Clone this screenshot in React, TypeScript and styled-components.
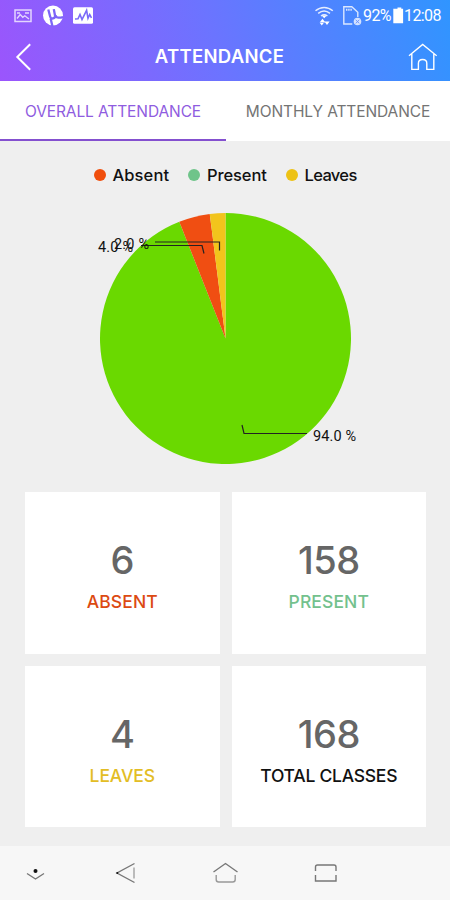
import React from "react";
import styled, { createGlobalStyle } from "styled-components";

const GlobalStyle = createGlobalStyle`
  * { box-sizing: border-box; }
  body { margin: 0; background: #efefef; }
`;

const Screen = styled.div`
  width: 450px;
  height: 900px;
  display: flex;
  flex-direction: column;
  overflow: hidden;
  background: #efefef;
  font-family: Inter, sans-serif;
  white-space: nowrap;
`;

const Header = styled.header`
  height: 81px;
  flex: none;
  color: #fff;
  background: linear-gradient(72deg, #9b55fc 0%, #6b74ff 48%, #3095ff 100%);
`;

const StatusBar = styled.div`
  height: 32px;
  display: flex;
  align-items: center;
  justify-content: space-between;
  padding: 0 8px 0 14px;
`;

const StatusGroup = styled.div`
  display: flex;
  align-items: center;
`;

const StatusText = styled.span<{ $width: number }>`
  width: ${(p) => p.$width}px;
  font: 400 16px/32px Roboto, sans-serif;
  letter-spacing: -0.6px;
`;

const TitleBar = styled.div`
  height: 49px;
  display: grid;
  grid-template-columns: 55px 1fr 66px;
  align-items: center;
`;

const Title = styled.h1`
  margin: 0;
  padding-bottom: 2px;
  text-align: center;
  font-size: 18.5px;
  line-height: 24px;
  font-weight: 600;
  letter-spacing: 0.3px;
`;

const IconSlot = styled.div<{ $end?: boolean }>`
  display: flex;
  justify-content: ${(p) => (p.$end ? "flex-end" : "flex-start")};
  padding: 0 13px;
`;

const Tabs = styled.nav`
  height: 60px;
  flex: none;
  display: grid;
  grid-template-columns: 226px 224px;
  background: #fff;
`;

const Tab = styled.div<{ $active?: boolean }>`
  text-align: center;
  font-size: 15.5px;
  line-height: 61px;
  height: 60px;
  letter-spacing: -0.1px;
  color: ${(p) => (p.$active ? "#8f5ce0" : "#747474")};
  box-shadow: ${(p) => (p.$active ? "inset 0 -2px #8450cf" : "none")};
`;

const Legend = styled.div`
  height: 68px;
  flex: none;
  display: grid;
  grid-template-columns: 94.5px 97.5px 67px;
  padding-left: 93.5px;
`;

const LegendItem = styled.div<{ $color: string; $spacing: number }>`
  display: flex;
  align-items: center;
  gap: 7px;
  font-size: 16.5px;
  font-weight: 450;
  letter-spacing: ${(p) => p.$spacing}px;
  color: #111;
  &::before {
    content: "";
    width: 12px;
    height: 12px;
    flex: none;
    border-radius: 50%;
    background: ${(p) => p.$color};
  }
`;

const Chart = styled.svg`
  flex: none;
  display: block;
  font-family: Roboto, sans-serif;
  font-size: 14.5px;
`;

const Cards = styled.main`
  flex: none;
  height: 354px;
  padding: 0 24px 19px 25px;
  display: grid;
  grid-template-columns: 1fr 1fr;
  grid-template-rows: 162px 161px;
  gap: 12px;
`;

const Card = styled.section`
  display: flex;
  flex-direction: column;
  align-items: center;
  padding-top: 46px;
  background: #fff;
`;

const Count = styled.div`
  font-size: 38px;
  line-height: 44px;
  font-weight: 500;
  letter-spacing: -0.5px;
  color: #666;
`;

const CardLabel = styled.div<{ $color: string; $spacing: number }>`
  margin-top: 7px;
  font-size: 17.5px;
  line-height: 25px;
  font-weight: 500;
  letter-spacing: ${(p) => p.$spacing}px;
  color: ${(p) => p.$color};
`;

const NavBar = styled.footer`
  height: 54px;
  flex: none;
  background: #f7f7f7;
`;

const legend = [
  { label: "Absent", color: "#f04e0c", spacing: 0.1 },
  { label: "Present", color: "#6fc48a", spacing: -0.1 },
  { label: "Leaves", color: "#edc215", spacing: -0.65 },
];

const cards = [
  { count: 6, label: "ABSENT", color: "#dc4a12", spacing: 0.1 },
  { count: 158, label: "PRESENT", color: "#73c18d", spacing: 0.1 },
  { count: 4, label: "LEAVES", color: "#e3bd25", spacing: -0.1 },
  { count: 168, label: "TOTAL CLASSES", color: "#111", spacing: -0.25 },
];

const CX = 225.5;
const CY = 338.5;
const R = 125.5;

const slicePath = (from: number, to: number) => {
  const at = (f: number) => {
    const a = f * Math.PI * 2;
    return `${CX + R * Math.sin(a)} ${CY - R * Math.cos(a)}`;
  };
  return `M${CX} ${CY}L${at(from)}A${R} ${R} 0 ${to - from > 0.5 ? 1 : 0} 1 ${at(to)}Z`;
};

const StatusIconsLeft = () => (
  <svg width="82" height="32" viewBox="14 0 82 32" fill="none" stroke="#fff">
    <g opacity=".75">
      <rect x="15" y="10" width="16" height="11.5" strokeWidth="1.5" />
      <path d="M17 18.5l3.2-4 2.6 2.8 2-1.5 4.2 3.2M17 13h3M25 13h4" strokeWidth="1.4" />
    </g>
    <circle cx="53" cy="15.5" r="10" fill="#fff" stroke="none" />
    <path d="M48.3 9.5l1.9 7.2c.8 2.9 5.3 2 4.8-1.2l-1.2-6.4M55.5 15.2c.4 2.3 2.6 3.2 7.5 1.9M50.6 18.5l1.9 8" stroke="#7c64f8" strokeWidth="2.3" />
    <rect x="73" y="7.3" width="20" height="16.5" rx="1.5" fill="#fff" stroke="none" />
    <path d="M75 19l3-.2 2-4.3 2 5 4.6-9.2 1.4 8 1.7-3.8 1.8 3.3" stroke="#7a69f9" strokeWidth="1.6" />
  </svg>
);

const WifiSimIcons = () => (
  <svg width="49" height="32" viewBox="314 0 49 32" fill="none" stroke="#fff">
    <g strokeWidth="1.5" opacity=".85">
      <path d="M315.5 10.8c5.3-4.5 12-4.5 17.3 0M318.2 13.4c3.8-3 8-3 11.8 0M321 16c2-1.6 4.4-1.6 6.4 0" />
    </g>
    <path d="M324.2 18.3l-2.5-2.8h5zM322.5 18.7l2.9 3.8h-5.8zM327 25l-2.6-3.5h5.2zM321.8 25.5l-1.9-2.5h3.8z" fill="#fff" stroke="none" />
    <path d="M352.3 24h-8.5V6.7h8l6 5.6V17" strokeWidth="1.4" opacity=".8" />
    <path d="M346 9.8h6" strokeWidth="2" strokeDasharray="1.4 .8" opacity=".8" />
    <circle cx="357.5" cy="21.5" r="3.8" fill="#d4e2ff" stroke="none" />
    <path d="M355.7 19.8l3.6 3.6M359.3 19.8l-3.6 3.6" stroke="#658fff" strokeWidth=".9" />
  </svg>
);

export default function App() {
  return (
    <>
      <GlobalStyle />
      <Screen>
        <Header>
          <StatusBar>
            <StatusIconsLeft />
            <StatusGroup>
              <WifiSimIcons />
              <StatusText $width={29}>92%</StatusText>
              <svg width="12" height="32" fill="#fff">
                <path d="M3.2 8.7h2.3V7.5h3.8v1.2h1.8v14.5H1.3V8.7z" />
              </svg>
              <StatusText $width={38}>12:08</StatusText>
            </StatusGroup>
          </StatusBar>
          <TitleBar>
            <IconSlot>
              <svg width="22" height="30" viewBox="13 41 22 30" fill="none" stroke="#fff" strokeWidth="2">
                <path d="M30.2 43.2L17.3 56l12.9 12.8" />
              </svg>
            </IconSlot>
            <Title>ATTENDANCE</Title>
            <IconSlot $end>
              <svg width="30" height="30" viewBox="407 41 30 30" fill="none" stroke="#fff" strokeWidth="1.4">
                <path d="M409 54.8l13.7-11.3 14 11.3M411.8 53v15.4h6.6v-6c0-5.2 8.4-5.2 8.4 0v6h7V53" />
              </svg>
            </IconSlot>
          </TitleBar>
        </Header>

        <Tabs>
          <Tab $active>OVERALL ATTENDANCE</Tab>
          <Tab>MONTHLY ATTENDANCE</Tab>
        </Tabs>

        <Legend>
          {legend.map((l) => (
            <LegendItem key={l.label} $color={l.color} $spacing={l.spacing}>{l.label}</LegendItem>
          ))}
        </Legend>

        <Chart width="450" height="283" viewBox="0 209 450 283">
          <path d={slicePath(0, 0.94)} fill="#6ad900" />
          <path d={slicePath(0.94, 0.98)} fill="#f04e12" />
          <path d={slicePath(0.98, 1)} fill="#f2c41c" />
          <g fill="none" stroke="#222" strokeWidth="1.2">
            <path d="M242 425l2 8.5h63" />
            <path d="M204 253.5l-2-8h-61" />
            <path d="M219.5 250.5V242H155" />
          </g>
          <g fill="#111">
            <text x="313" y="441" textLength="43">94.0 %</text>
            <text x="98" y="252" textLength="35">4.0 %</text>
            <text x="114" y="249" textLength="35">2.0 %</text>
          </g>
        </Chart>

        <Cards>
          {cards.map((c) => (
            <Card key={c.label}>
              <Count>{c.count}</Count>
              <CardLabel $color={c.color} $spacing={c.spacing}>{c.label}</CardLabel>
            </Card>
          ))}
        </Cards>

        <NavBar>
          <svg width="450" height="54" viewBox="0 846 450 54" fill="none" stroke="#777" strokeWidth="1.4">
            <circle cx="35.5" cy="871" r="2" fill="#111" stroke="none" />
            <path d="M27 873.5l8.5 5.5 8.5-5.5" />
            <path d="M134.5 863.5L117 873l17.5 9.5" />
            <path d="M134 867.5v11" stroke="#bbb" strokeWidth="2" />
            <circle cx="117.3" cy="873" r="1" fill="#111" stroke="none" />
            <path d="M213.5 872l12-8.5 12 8.5" />
            <path d="M216.2 875v4.5q0 2.5 2.5 2.5h14q2.5 0 2.5-2.5V875" stroke="#999" />
            <path d="M315.5 871v-4q0-2 2-2h16.5q2 0 2 2v4M315.5 875v6H336v-6" />
          </svg>
        </NavBar>
      </Screen>
    </>
  );
}
